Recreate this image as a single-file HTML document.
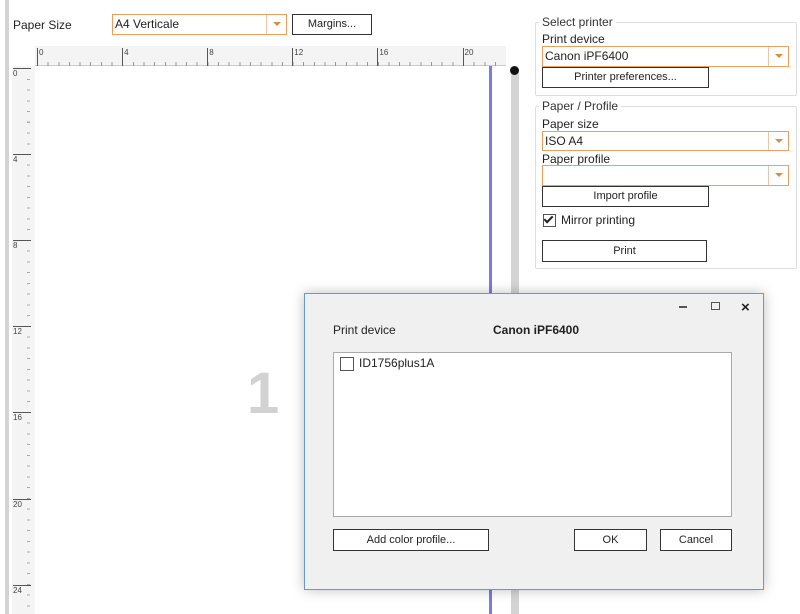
<!DOCTYPE html>
<html><head><meta charset="utf-8"><style>
*{box-sizing:border-box;margin:0;padding:0}
body{width:800px;height:614px;background:#fff;position:relative;overflow:hidden;font-family:"Liberation Sans",sans-serif;font-size:12px;color:#222}
.a{position:absolute}
.btn{position:absolute;border:1px solid #333;background:#fff;text-align:center;font-size:11px;line-height:19px}
.combo{position:absolute;border:1px solid #e8a060;background:#fff;font-size:12px;line-height:18px;padding-left:2px}
.combo .arr{position:absolute;right:0;top:0;width:20px;height:100%;border-left:1px solid #e8c8a8}
.combo .arr:after{content:"";position:absolute;left:6px;top:7px;border-left:4px solid transparent;border-right:4px solid transparent;border-top:4px solid #e08a40}
.grp{position:absolute;border:1px solid #ddd;border-radius:2px}
.gt{position:absolute;background:#fff;padding:0 3px;font-size:12px;color:#333}
.hl{position:absolute;font-size:8px;color:#444}
</style></head><body>
<div class="a" style="left:5px;top:0;width:4px;height:614px;background:#d4d4d4"></div>
<div class="a" style="left:13px;top:18px;font-size:12px">Paper Size</div>
<div class="combo" style="left:112px;top:14px;width:175px;height:21px">A4 Verticale<div class="arr"></div></div>
<div class="btn" style="left:292px;top:14px;width:80px;height:21px">Margins...</div>
<!-- top ruler -->
<div class="a" style="left:35px;top:46px;width:471px;height:20px;background:#f4f4f4;border-bottom:1px solid #ccc"></div>
<div class="a" style="left:37px;top:62px;width:465px;height:4px;background:repeating-linear-gradient(90deg,#999 0 1px,transparent 1px 10.65px)"></div>
<!-- left ruler -->
<div class="a" style="left:12px;top:66px;width:23px;height:548px;background:#f4f4f4"></div>
<div class="a" style="left:27px;top:68px;width:3px;height:546px;background:repeating-linear-gradient(180deg,#aaa 0 1px,transparent 1px 10.75px)"></div>
<!-- page -->
<div class="a" style="left:35px;top:66px;width:455px;height:548px;background:#fff"></div>
<div class="a" style="left:489px;top:66px;width:3px;height:548px;background:#7a7ae8"></div>
<div class="a" style="left:511px;top:72px;width:8px;height:542px;background:#d4d4d4"></div>
<div class="a" style="left:510px;top:66px;width:9px;height:9px;border-radius:50%;background:#111"></div>
<div class="a" style="left:247px;top:360px;font-size:58px;font-weight:bold;color:#d2d2d2">1</div>
<div id="tr"></div>
<!-- right panel -->
<div class="grp" style="left:535px;top:22px;width:262px;height:74px"></div>
<div class="gt" style="left:539px;top:15px">Select printer</div>
<div class="a" style="left:542px;top:32px">Print device</div>
<div class="combo" style="left:542px;top:46px;width:247px;height:21px">Canon iPF6400<div class="arr"></div></div>
<div class="btn" style="left:542px;top:67px;width:167px;height:21px">Printer preferences...</div>
<div class="grp" style="left:535px;top:106px;width:262px;height:163px"></div>
<div class="gt" style="left:539px;top:99px">Paper / Profile</div>
<div class="a" style="left:542px;top:117px">Paper size</div>
<div class="combo" style="left:542px;top:131px;width:247px;height:20px">ISO A4<div class="arr"></div></div>
<div class="a" style="left:542px;top:152px">Paper profile</div>
<div class="combo" style="left:542px;top:165px;width:247px;height:21px"><div class="arr"></div></div>
<div class="btn" style="left:542px;top:186px;width:167px;height:21px">Import profile</div>
<div class="a" style="left:543px;top:214px;width:13px;height:13px;border:1px solid #555;background:#fff"></div>
<div class="a" style="left:546px;top:214px;width:5px;height:9px;border-right:2px solid #222;border-bottom:2px solid #222;transform:rotate(45deg)"></div>
<div class="a" style="left:561px;top:213px">Mirror printing</div>
<div class="btn" style="left:542px;top:240px;width:165px;height:22px;line-height:20px">Print</div>
<!-- dialog -->
<div class="a" style="left:304px;top:293px;width:460px;height:297px;background:#f0f0f0;border:1px solid #6a9ac8;box-shadow:0 0 12px rgba(0,0,0,.25)"></div>
<div class="a" style="left:679px;top:306px;width:8px;height:2px;background:#555"></div>
<div class="a" style="left:711px;top:302px;width:9px;height:8px;border:1px solid #555"></div>
<div class="a" style="left:741px;top:299px;font-size:15px;font-weight:bold;color:#222">×</div>
<div class="a" style="left:333px;top:323px">Print device</div>
<div class="a" style="left:493px;top:323px;font-weight:bold">Canon iPF6400</div>
<div class="a" style="left:333px;top:352px;width:399px;height:165px;background:#fff;border:1px solid #aaa"></div>
<div class="a" style="left:340px;top:357px;width:14px;height:14px;border:1px solid #555;background:#fff"></div>
<div class="a" style="left:359px;top:356px">ID1756plus1A</div>
<div class="btn" style="left:333px;top:529px;width:156px;height:22px;line-height:20px">Add color profile...</div>
<div class="btn" style="left:574px;top:529px;width:73px;height:22px;line-height:20px">OK</div>
<div class="btn" style="left:660px;top:529px;width:72px;height:22px;line-height:20px">Cancel</div>
<script>
var s='';[0,4,8,12,16,20].forEach(function(n,i){var x=37+i*85.1;s+='<div class="a" style="left:'+x+'px;top:48px;width:1px;height:18px;background:#555"></div><div class="hl" style="left:'+(x+2)+'px;top:48px">'+n+'</div>';});
[0,4,8,12,16,20,24].forEach(function(n,i){var y=68+i*86.1;s+='<div class="a" style="left:13px;top:'+y+'px;width:18px;height:1px;background:#555"></div><div class="hl" style="left:13px;top:'+(y+1)+'px">'+n+'</div>';});
document.getElementById('tr').innerHTML=s;
</script>
</body></html>
